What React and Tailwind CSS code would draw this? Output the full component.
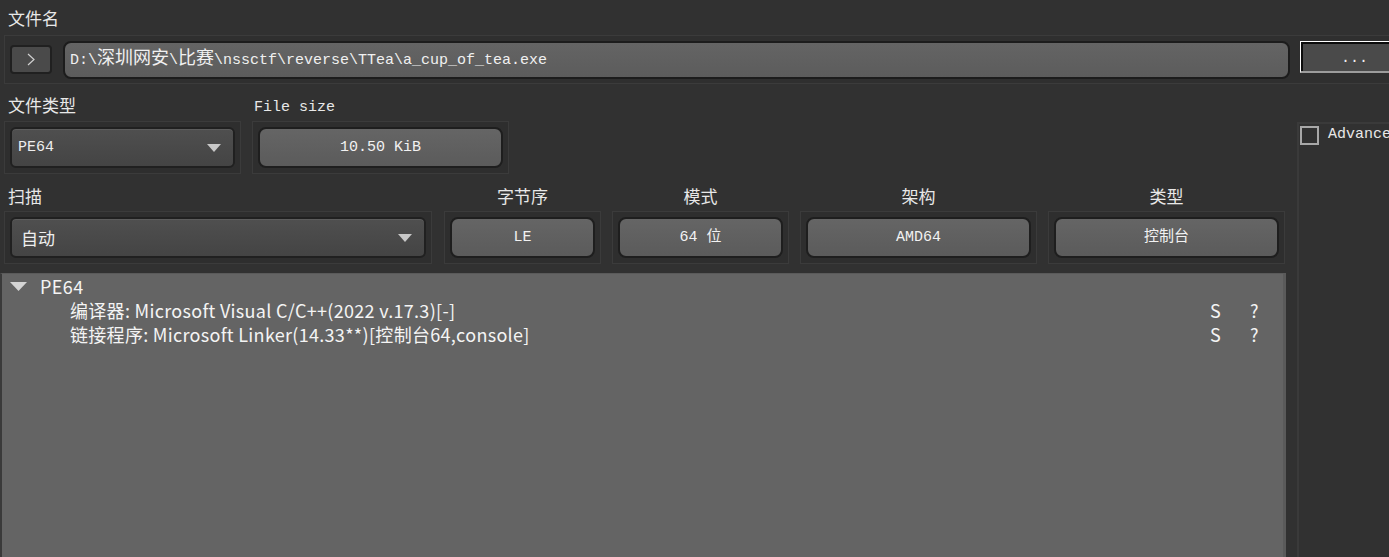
import React from "react";

const cjk = "font-['Noto_Sans_CJK_SC',sans-serif]";
const mono = "font-['Liberation_Mono','Noto_Sans_CJK_SC',monospace]";

const Frame = ({ className, children }) => (
  <div
    className={`h-[53px] shrink-0 border border-[#3b3b3b] bg-[#2e2e2e] p-[5px] ${className}`}
  >
    {children}
  </div>
);

const Arrow = ({ w = 14, h = 8, color = "#c8c8c8" }) => (
  <svg width={w} height={h} viewBox={`0 0 ${w} ${h}`}>
    <polygon points={`0,0 ${w},0 ${w / 2},${h}`} fill={color} />
  </svg>
);

const Combo = ({ value, textClass }) => (
  <div className="flex h-full items-center rounded-[6px] border-2 border-[#202020] bg-linear-to-b from-[#4f4f4f] to-[#444444] pl-[6px] pr-[12px] shadow-[inset_0_1px_0_#5c5c5c]">
    <span className={`flex-1 text-[15px] leading-[24px] text-[#eeeeee] ${textClass}`}>
      {value}
    </span>
    <Arrow />
  </div>
);

const ValueButton = ({ value }) => (
  <div
    className={`flex h-full items-center justify-center rounded-[8px] border-2 border-[#1e1e1e] bg-linear-to-b from-[#656565] to-[#5b5b5b] text-[15px] leading-[24px] text-[#f2f2f2] ${mono}`}
  >
    {value}
  </div>
);

const Header = ({ className, children }) => (
  <div
    className={`shrink-0 pt-[10px] text-[17px] leading-[24px] text-[#e8e8e8] ${cjk} ${className}`}
  >
    {children}
  </div>
);

const results = [
  "编译器: Microsoft Visual C/C++(2022 v.17.3)[-]",
  "链接程序: Microsoft Linker(14.33**)[控制台64,console]",
];

export default function App() {
  return (
    <div className="flex h-[557px] w-[1389px] flex-col overflow-hidden bg-[#313131] text-[#e8e8e8]">
      <div className={`h-[35px] shrink-0 pl-[8px] pt-[6px] text-[17px] leading-[24px] ${cjk}`}>
        文件名
      </div>

      {/* file path row */}
      <div className="ml-[4px] flex h-[49px] shrink-0 items-center border-y border-l border-[#3b3b3b] bg-[#2f2f2f]">
        <div className="ml-[5px] flex h-[29px] w-[42px] shrink-0 items-center justify-center rounded-[4px] border-2 border-[#202020] bg-[#4a4a4a]">
          <svg width="8" height="13" viewBox="0 0 8 13">
            <polyline points="1,1 7,6.5 1,12" fill="none" stroke="#d0d0d0" strokeWidth="1.2" />
          </svg>
        </div>
        <div className="ml-[11px] flex h-[38px] w-[1227px] shrink-0 items-center rounded-[8px] border-2 border-[#1c1c1c] bg-linear-to-b from-[#646464] to-[#5c5c5c] pl-[5px]">
          <span className={`text-[15px] leading-[24px] text-[#f0f0f0] ${mono}`}>
            D:\<span className="text-[18px]">深圳网安</span>\<span className="text-[18px]">比赛</span>\nssctf\reverse\TTea\a_cup_of_tea.exe
          </span>
        </div>
        <div className="mb-[6px] ml-[10px] h-[32px] w-[106px] shrink-0 border-l border-t border-b-2 border-white border-b-[#9c9c9c]">
          <div
            className={`flex h-full items-center justify-center border-l-2 border-t-2 border-[#0c0c0c] bg-[#4a4a4a] pt-[4px] text-[15px] leading-[20px] text-[#f0f0f0] ${mono}`}
          >
            ...
          </div>
        </div>
      </div>

      <div className="flex min-h-0 flex-1">
        <div className="flex w-[1286px] shrink-0 flex-col">
          {/* type / size */}
          <div className="flex shrink-0">
            <div className="ml-[4px] w-[237px] shrink-0">
              <div className={`h-[37px] pl-[4px] pt-[9px] text-[17px] leading-[24px] ${cjk}`}>
                文件类型
              </div>
              <Frame>
                <Combo value="PE64" textClass={mono} />
              </Frame>
            </div>
            <div className="ml-[11px] w-[257px] shrink-0">
              <div className={`h-[37px] pl-[2px] pt-[12px] text-[15px] leading-[24px] ${mono}`}>
                File size
              </div>
              <Frame>
                <ValueButton value="10.50 KiB" />
              </Frame>
            </div>
          </div>

          {/* scan headers */}
          <div className="flex h-[37px] shrink-0">
            <Header className="ml-[4px] w-[428px] pl-[4px] text-left">扫描</Header>
            <Header className="ml-[12px] w-[157px] text-center">字节序</Header>
            <Header className="ml-[11px] w-[177px] text-center">模式</Header>
            <Header className="ml-[11px] w-[237px] text-center">架构</Header>
            <Header className="ml-[11px] w-[237px] text-center">类型</Header>
          </div>
          <div className="flex shrink-0">
            <Frame className="ml-[4px] w-[428px]">
              <Combo value="自动" textClass={`${cjk} pl-[3px] text-[17px]`} />
            </Frame>
            <Frame className="ml-[12px] w-[157px]">
              <ValueButton value="LE" />
            </Frame>
            <Frame className="ml-[11px] w-[177px]">
              <ValueButton value="64 位" />
            </Frame>
            <Frame className="ml-[11px] w-[237px]">
              <ValueButton value="AMD64" />
            </Frame>
            <Frame className="ml-[11px] w-[237px]">
              <ValueButton value="控制台" />
            </Frame>
          </div>

          {/* result tree */}
          <div
            className={`mt-[9px] flex-1 border-l-2 border-r-[3px] border-t border-[#5a5a5a] border-l-[#3a3a3a] bg-[#646464] text-[18px] leading-[24px] text-[#f4f4f4] ${cjk}`}
          >
            <div className="flex h-[24px] items-center pl-[8px]">
              <Arrow w={17} h={9} color="#d4d4d4" />
              <span className="ml-[13px] tracking-[0.4px]">PE64</span>
            </div>
            {results.map((line, index) => (
              <div key={index} className="flex h-[24px] items-center pl-[68px]">
                <span className="flex-1 tracking-[0.3px]">{line}</span>
                <span className="w-[40px]">S</span>
                <span className="w-[33px]">?</span>
              </div>
            ))}
          </div>
        </div>

        {/* options side */}
        <div className="min-w-0 flex-1 pl-[11px] pt-[38px]">
          <div className="h-full border-l-2 border-t-2 border-[#3a3a3a] pl-[1px] pt-[1px]">
            <div className="flex items-center">
              <div className="h-[19px] w-[19px] shrink-0 border-2 border-[#a8a8a8]" />
              <span className={`ml-[9px] whitespace-nowrap text-[15px] leading-[20px] ${mono}`}>
                Advanced
              </span>
            </div>
          </div>
        </div>
      </div>
    </div>
  );
}
